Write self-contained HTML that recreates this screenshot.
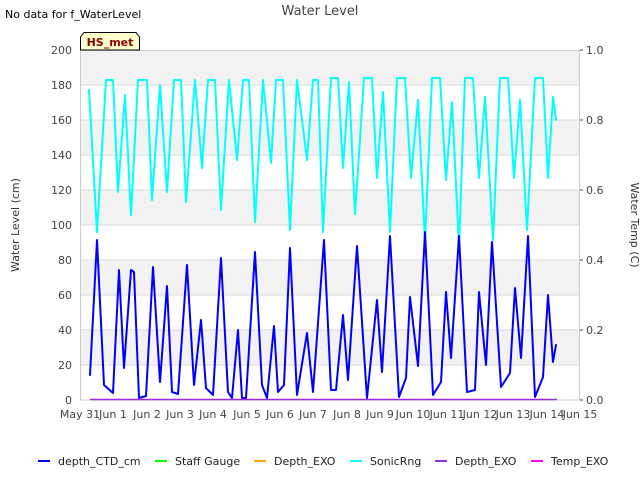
<!DOCTYPE html>
<html><head><meta charset="utf-8"><style>
body{margin:0;background:#fff;font-family:"DejaVu Sans","Liberation Sans",sans-serif;}
</style></head><body>
<svg width="640" height="480" xmlns="http://www.w3.org/2000/svg" font-family="DejaVu Sans, Liberation Sans, sans-serif">
<rect x="80" y="50" width="500" height="350" fill="#fff"/>
<g fill="#f2f2f2">
<rect x="80" y="50" width="500" height="35"/>
<rect x="80" y="120" width="500" height="35"/>
<rect x="80" y="190" width="500" height="35"/>
<rect x="80" y="260" width="500" height="35"/>
<rect x="80" y="330" width="500" height="35"/>
</g>
<g stroke="#d9d9d9" stroke-width="1">
<line x1="80" y1="85" x2="580" y2="85"/><line x1="80" y1="120" x2="580" y2="120"/>
<line x1="80" y1="155" x2="580" y2="155"/><line x1="80" y1="190" x2="580" y2="190"/>
<line x1="80" y1="225" x2="580" y2="225"/><line x1="80" y1="260" x2="580" y2="260"/>
<line x1="80" y1="295" x2="580" y2="295"/><line x1="80" y1="330" x2="580" y2="330"/>
<line x1="80" y1="365" x2="580" y2="365"/>
</g>
<rect x="80.5" y="50.5" width="499" height="349.5" fill="none" stroke="#ccc"/>
<polyline fill="none" stroke="#00ffff" stroke-width="2" stroke-linejoin="round" stroke-linecap="round" points="89,90 97,232 106,80 113,80 118,192 125,95 131,215 138,80 147,80 152,200 160,85 167,192 174,80 181,80 186,202 195,80 202,168 208,80 215,80 221,210 229,80 237,160 243,80 249,80 255,222 263,80 271,163 276,80 283,80 290,230 297,80 307,160 313,80 318,80 323,232 331,78 338,78 343,168 349,82 355,214 364,78 372,78 377,178 383,92 390,232 397,78 405,78 411,178 418,100 425,242 432,78 440,78 446,180 452,102 459,246 465,78 473,78 479,178 485,97 493,240 500,78 508,78 514,178 520,100 527,230 535,78 543,78 548,178 553,97 556,120"/>
<polyline fill="none" stroke="#0000ff" stroke-width="2" stroke-linejoin="round" stroke-linecap="round" points="90,375 97,240 104,385 113,393 119,270 124,368 131,270 134,272 139,398 146,396 153,267 160,382 167,286 172,392 178,394 187,265 194,385 201,320 206,388 213,395 221,258 228,392 232,398 238,330 242,398 246,398 255,252 262,385 267,398 274,326 278,392 284,385 290,248 297,395 307,333 313,392 324,240 331,390 336,390 343,315 348,380 357,246 367,398 377,300 382,372 390,236 399,397 406,378 410,297 418,366 425,232 433,395 441,382 446,292 451,358 459,236 467,392 475,390 479,292 486,365 492,242 501,387 510,373 515,288 521,358 528,236 535,397 543,377 548,295 553,362 556,345"/>
<line x1="90" y1="399.5" x2="557" y2="399.5" stroke="#9a2be2" stroke-width="1.5"/>
<g font-size="11" fill="#444" text-anchor="end">
<text x="72" y="54">200</text><text x="72" y="89">180</text><text x="72" y="124">160</text>
<text x="72" y="159">140</text><text x="72" y="194">120</text><text x="72" y="229">100</text>
<text x="72" y="264">80</text><text x="72" y="299">60</text><text x="72" y="334">40</text>
<text x="72" y="369">20</text><text x="72" y="404">0</text>
</g>
<g font-size="11" fill="#444">
<text x="586" y="54">1.0</text><text x="586" y="124">0.8</text><text x="586" y="194">0.6</text>
<text x="586" y="264">0.4</text><text x="586" y="334">0.2</text><text x="586" y="404">0.0</text>
</g>
<g stroke="#444"><line x1="580" y1="50" x2="583" y2="50"/><line x1="580" y1="120" x2="583" y2="120"/><line x1="580" y1="190" x2="583" y2="190"/><line x1="580" y1="260" x2="583" y2="260"/><line x1="580" y1="330" x2="583" y2="330"/><line x1="580" y1="400" x2="583" y2="400"/></g>
<g font-size="11" fill="#444" text-anchor="middle">
<text x="80" y="418">May 31</text><text x="113" y="418">Jun 1</text><text x="147" y="418">Jun 2</text>
<text x="180" y="418">Jun 3</text><text x="213" y="418">Jun 4</text><text x="247" y="418">Jun 5</text>
<text x="280" y="418">Jun 6</text><text x="313" y="418">Jun 7</text><text x="347" y="418">Jun 8</text>
<text x="380" y="418">Jun 9</text><text x="413" y="418">Jun 10</text><text x="447" y="418">Jun 11</text>
<text x="480" y="418">Jun 12</text><text x="513" y="418">Jun 13</text><text x="547" y="418">Jun 14</text>
<text x="580" y="418">Jun 15</text>
</g>
<text x="320" y="15" font-size="13" fill="#444" text-anchor="middle">Water Level</text>
<text x="5" y="18" font-size="11" fill="#000">No data for f_WaterLevel</text>
<text transform="translate(19,225) rotate(-90)" font-size="11" fill="#333" text-anchor="middle">Water Level (cm)</text>
<text transform="translate(631,225) rotate(90)" font-size="11" fill="#333" text-anchor="middle">Water Temp (C)</text>
<path d="M80.5,50 V37 L84,32.5 H136 L139.5,37 V50 Z" fill="#ffffcc" stroke="#000"/>
<text x="110" y="46" font-size="11" font-weight="bold" fill="#8b0000" text-anchor="middle">HS_met</text>
<g font-size="11" fill="#222">
<line x1="38" y1="461" x2="50" y2="461" stroke="#0000ff" stroke-width="2"/><text x="58" y="465">depth_CTD_cm</text>
<line x1="155" y1="461" x2="167" y2="461" stroke="#00ff00" stroke-width="2"/><text x="175" y="465">Staff Gauge</text>
<line x1="254" y1="461" x2="266" y2="461" stroke="#ffa500" stroke-width="2"/><text x="274" y="465">Depth_EXO</text>
<line x1="350" y1="461" x2="362" y2="461" stroke="#00ffff" stroke-width="2"/><text x="370" y="465">SonicRng</text>
<line x1="435" y1="461" x2="447" y2="461" stroke="#9a2be2" stroke-width="2"/><text x="455" y="465">Depth_EXO</text>
<line x1="531" y1="461" x2="543" y2="461" stroke="#ff00ff" stroke-width="2"/><text x="551" y="465">Temp_EXO</text>
</g>
</svg>
</body></html>
